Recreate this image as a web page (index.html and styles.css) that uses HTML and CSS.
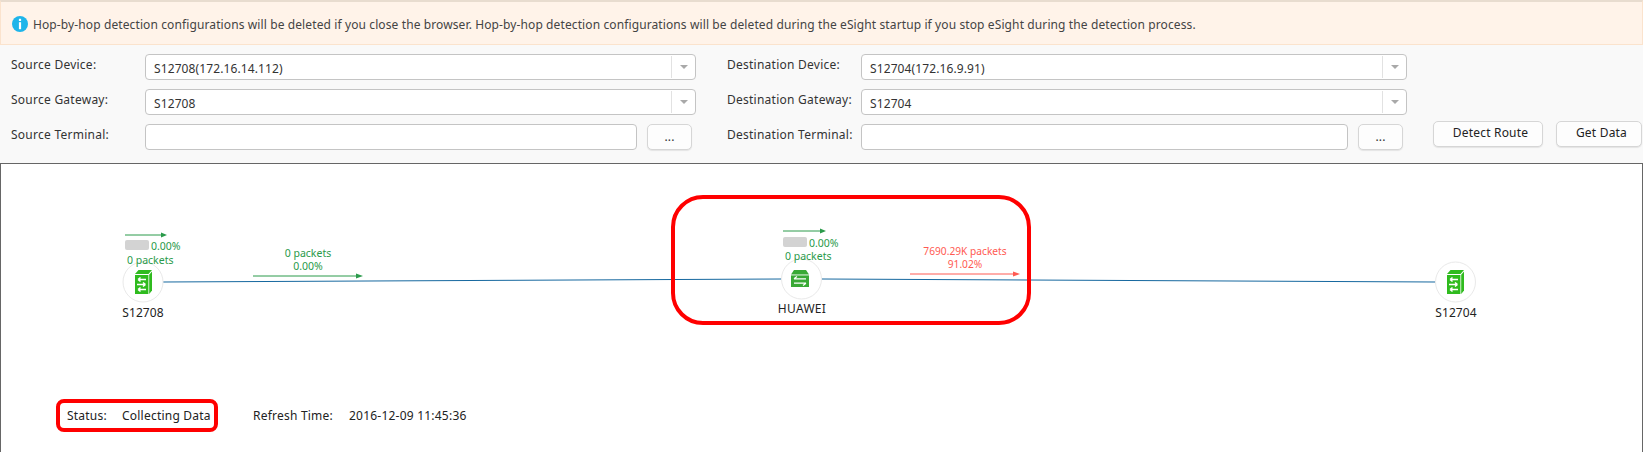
FILE: index.html
```html
<!DOCTYPE html>
<html lang="en">
<head>
<meta charset="utf-8">
<title>Hop-by-hop detection</title>
<link rel="stylesheet" href="styles.css">
</head>
<body>
<div class="banner">
  <svg class="info" viewBox="0 0 16 16" width="16" height="16"><circle cx="8" cy="8" r="8" fill="#1eb5ea"/><rect x="6.9" y="2.8" width="2.2" height="2.2" fill="#fff"/><rect x="6.9" y="6.2" width="2.2" height="7" fill="#fff"/></svg>
  <span>Hop-by-hop detection configurations will be deleted if you close the browser. Hop-by-hop detection configurations will be deleted during the eSight startup if you stop eSight during the detection process.</span>
</div>
<form class="form">
  <label class="label">Source Device:</label>
  <div class="combo"><span class="combo-text">S12708(172.16.14.112)</span><span class="combo-btn"><i class="caret"></i></span></div>
  <label class="label label-dest">Destination Device:</label>
  <div class="combo"><span class="combo-text">S12704(172.16.9.91)</span><span class="combo-btn"><i class="caret"></i></span></div>
  <div></div>

  <label class="label">Source Gateway:</label>
  <div class="combo"><span class="combo-text">S12708</span><span class="combo-btn"><i class="caret"></i></span></div>
  <label class="label label-dest">Destination Gateway:</label>
  <div class="combo"><span class="combo-text">S12704</span><span class="combo-btn"><i class="caret"></i></span></div>
  <div></div>

  <label class="label">Source Terminal:</label>
  <div class="picker"><div class="text-input"></div><div class="dots">...</div></div>
  <label class="label label-dest">Destination Terminal:</label>
  <div class="picker"><div class="text-input"></div><div class="dots">...</div></div>
  <div class="actions"><div class="btn btn-detect">Detect Route</div><div class="btn btn-get">Get Data</div></div>
</form>
<main class="canvas">
  <svg class="diagram" viewBox="1 164 1641 288" width="1641" height="288">
    <defs>
      <g id="tower">
        <path d="M0 4 L3.5 0 H17 L13.5 4Z" fill="#2fbb1e"/>
        <path d="M14.2 4.8 L17 1.4 V20.5 L14.2 24Z" fill="#2fbb1e"/>
        <rect x="0" y="5" width="13.4" height="19" fill="#2fbb1e"/>
        <path d="M3 9.5H11M3 9.5l2.5-2M3 9.5l2.5 2" stroke="#fff" stroke-width="1.5" fill="none"/>
        <path d="M2 14.5H10.5M10.5 14.5l-2.5-2M10.5 14.5l-2.5 2" stroke="#fff" stroke-width="1.5" fill="none"/>
        <path d="M3 19.5H11M3 19.5l2.5-2M3 19.5l2.5 2" stroke="#fff" stroke-width="1.5" fill="none"/>
      </g>
      <g id="router">
        <path d="M3 0H15L18 4.4H0Z" fill="#39a935"/>
        <rect x="0" y="5.4" width="18" height="11.6" fill="#39a935"/>
        <path d="M3 8.8H15M3 8.8l3-2.2M3 13.2H15M15 13.2l-3 2.2" stroke="#fff" stroke-width="1.2" fill="none"/>
      </g>
    </defs>
    <path class="link" d="M163 282 L781 279"/>
    <path class="link" d="M822 279 L1435 282"/>

    <circle class="halo" cx="143" cy="282" r="20"/>
    <use href="#tower" x="135" y="270"/>
    <circle class="halo" cx="801.5" cy="279" r="20"/>
    <use href="#router" x="791" y="270"/>
    <circle class="halo" cx="1455.5" cy="282" r="20"/>
    <use href="#tower" x="1447" y="270"/>

    <path class="arrow-green" d="M125 235H162"/><path class="head-green" d="M167 235l-6-2.5v5z"/>
    <rect class="bar" x="125" y="240" width="24" height="10" rx="2"/>
    <path class="arrow-green" d="M253 276H357"/><path class="head-green" d="M363 276l-7-2.5v5z"/>
    <path class="arrow-green" d="M783 231H820"/><path class="head-green" d="M826 231l-6-2.5v5z"/>
    <rect class="bar" x="783" y="237" width="24" height="10" rx="2"/>
    <path class="arrow-red" d="M910 274H1014"/><path class="head-red" d="M1020 274l-7-2.5v5z"/>

    <rect class="mark" x="673" y="197" width="356" height="126" rx="30"/>
    <rect class="mark" x="58" y="401" width="158" height="29" rx="6"/>
  </svg>

  <div class="tag green stat-a">0.00%</div>
  <div class="tag green pk-a">0 packets</div>
  <div class="tag green center link-a">0 packets<br>0.00%</div>
  <div class="tag dark center name-a">S12708</div>
  <div class="tag green stat-b">0.00%</div>
  <div class="tag green pk-b">0 packets</div>
  <div class="tag red center link-b">7690.29K packets<br>91.02%</div>
  <div class="tag dark center name-b">HUAWEI</div>
  <div class="tag dark center name-c">S12704</div>

  <div class="status">
    <span class="status-key">Status:</span>
    <span class="status-val">Collecting Data</span>
    <span class="refresh-key">Refresh Time:</span>
    <span>2016-12-09 11:45:36</span>
  </div>
</main>
</body>
</html>
```
FILE: styles.css
```css
* { box-sizing: border-box; }
html, body { margin: 0; padding: 0; height: 452px; overflow: hidden; }
body {
  background: #f9f9f9;
  font-family: "Noto Sans", "Liberation Sans", sans-serif;
  font-size: 12px;
  letter-spacing: 0.11px;
  color: #333;
}
.banner {
  height: 45px;
  display: flex;
  align-items: center;
  gap: 5px;
  padding: 2px 0 0 11px;
  background: #fff3e9;
  border-top: 2px solid #e8dccf;
  border-bottom: 1px solid #fbe3cd;
  border-left: 1px solid #fbe3cd;
  border-right: 1px solid #fbe3cd;
  color: #444;
}
.info { flex: none; }
.form {
  height: 118px;
  margin: 0;
  padding: 9px 0 0 11px;
  display: grid;
  grid-template-columns: 134px 551px 165px 546px 1fr;
  grid-auto-rows: 26px;
  row-gap: 9px;
}
.label { line-height: 22px; white-space: nowrap; letter-spacing: 0.25px; }
.label-dest { padding-left: 31px; }
.combo, .text-input {
  background: #fff;
  border: 1px solid #c4c4c4;
  border-radius: 4px;
  height: 26px;
}
.combo { display: flex; }
.combo-text { flex: 1; padding: 3px 0 0 8px; line-height: 21px; }
.combo-btn {
  width: 24px;
  margin: 1px 0;
  border-left: 1px solid #e2e2e2;
  display: flex;
  align-items: center;
  justify-content: center;
}
.caret {
  width: 0; height: 0;
  border-left: 4px solid transparent;
  border-right: 4px solid transparent;
  border-top: 4px solid #a9a9a9;
}
.picker { display: flex; padding-right: 4px; }
.picker .text-input { flex: 1; }
.dots, .btn {
  background: #fdfdfd;
  border: 1px solid #d6d6d6;
  border-radius: 5px;
  height: 26px;
  text-align: center;
  box-shadow: 0 1px 1px #e4e4e4;
}
.dots { width: 45px; margin-left: 10px; line-height: 24px; color: #333; }
.actions { display: flex; margin: -3px 0 0 26px; gap: 13px; }
.btn { line-height: 22px; color: #222; letter-spacing: 0.2px; padding-left: 5px; }
.btn-detect { width: 110px; }
.btn-get { width: 86px; }

.canvas {
  position: relative;
  height: 289px;
  background: #fff;
  border: 1px solid #666;
  border-bottom: 0;
  display: flex;
  flex-direction: column;
  justify-content: flex-end;
}
.diagram { position: absolute; left: 0; top: 0; }
.link { stroke: #16689f; stroke-width: 1; fill: none; }
.halo { fill: #fff; stroke: #e9e9e9; stroke-width: 1; }
.bar { fill: #d3d3d3; }
.arrow-green { stroke: #2a9a4a; stroke-width: 1; fill: none; }
.head-green { fill: #2a9a4a; }
.arrow-red { stroke: #ff5a52; stroke-width: 1; fill: none; }
.head-red { fill: #ff5a52; }
.mark { fill: none; stroke: #ff0000; stroke-width: 4; }

.tag { position: absolute; line-height: 13px; white-space: nowrap; font-size: 10.5px; letter-spacing: 0; }
.center { text-align: center; }
.green { color: #2a9a4a; }
.red { color: #ff5a52; font-size: 10.2px; }
.dark { color: #222; line-height: 14px; font-size: 12px; letter-spacing: 0.1px; }
.stat-a { left: 150px; top: 76px; }
.pk-a { left: 126px; top: 90px; }
.link-a { left: 247px; top: 83px; width: 120px; }
.name-a { left: 112px; top: 142px; width: 60px; }
.stat-b { left: 808px; top: 73px; }
.pk-b { left: 784px; top: 86px; }
.link-b { left: 894px; top: 81px; width: 140px; }
.name-b { left: 771px; top: 138px; width: 60px; letter-spacing: 0.3px; }
.name-c { left: 1425px; top: 142px; width: 60px; }

.status {
  position: relative;
  display: flex;
  padding: 0 0 28px 66px;
  line-height: 16px;
  color: #222;
  letter-spacing: 0.22px;
}
.status-key { width: 55px; }
.status-val { width: 131px; }
.refresh-key { width: 96px; }
```
